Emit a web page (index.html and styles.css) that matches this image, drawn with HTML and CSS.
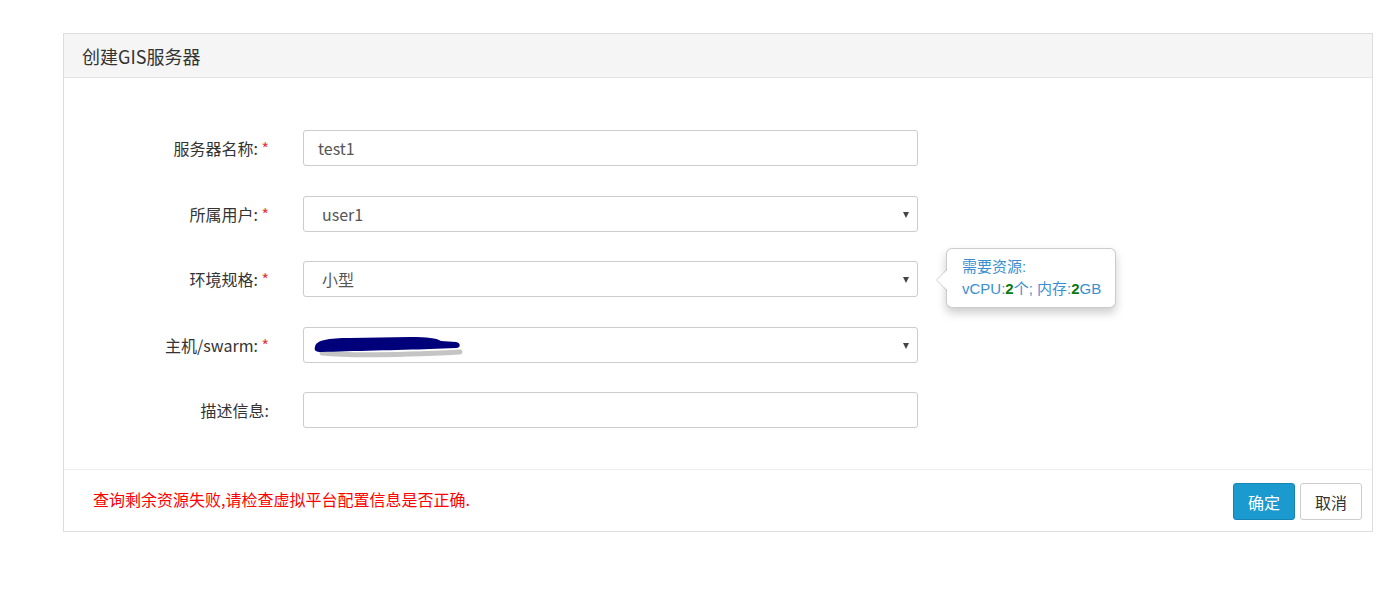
FILE: index.html
```html
<!DOCTYPE html>
<html lang="zh-CN">
<head>
<meta charset="utf-8">
<title>创建GIS服务器</title>
<link rel="stylesheet" href="styles.css">
</head>
<body>
<div class="panel">
  <div class="panel-heading">创建GIS服务器</div>
  <div class="panel-body">
    <div class="form-row">
      <label class="form-label">服务器名称: <span class="req">*</span></label>
      <div class="control">test1</div>
    </div>
    <div class="form-row">
      <label class="form-label">所属用户: <span class="req">*</span></label>
      <div class="control select"><span class="val">user1</span><span class="caret"></span></div>
    </div>
    <div class="form-row">
      <label class="form-label">环境规格: <span class="req">*</span></label>
      <div class="control select"><span class="val">小型</span><span class="caret"></span></div>
      <div class="popover">
        <div class="arrow"></div>
        <div class="pop-line">需要资源:</div>
        <div class="pop-line">vCPU:<b class="num">2</b>个; 内存:<b class="num">2</b>GB</div>
      </div>
    </div>
    <div class="form-row">
      <label class="form-label">主机/swarm: <span class="req">*</span></label>
      <div class="control select">
        <svg class="scribble" width="160" height="24" viewBox="0 0 160 24">
          <path d="M12 19 C40 22 90 21 150 18" stroke="#8a8a8a" stroke-width="5" fill="none" stroke-linecap="round" opacity="0.5"/>
          <path d="M5 13 C6 6 18 4 40 4 L100 3 C118 3 126 4 131 7 L146 8 C151 9 151 14 146 14 L120 15 C90 16 40 17 12 18 C5 18 4 16 5 13 Z" fill="#00007a"/>
        </svg>
        <span class="caret"></span>
      </div>
    </div>
    <div class="form-row">
      <label class="form-label">描述信息:</label>
      <div class="control"></div>
    </div>
  </div>
  <div class="panel-footer">
    <span class="error">查询剩余资源失败,请检查虚拟平台配置信息是否正确.</span>
    <div class="actions">
      <button class="btn btn-primary">确定</button>
      <button class="btn btn-default">取消</button>
    </div>
  </div>
</div>
</body>
</html>
```
FILE: styles.css
```css
html, body {
  margin: 0;
  padding: 0;
  background: #fff;
}
body {
  font-family: "Noto Sans CJK SC", "Liberation Sans", sans-serif;
  color: #333;
  padding: 33px 11px 0 63px;
}
.panel {
  border: 1px solid #ddd;
  background: #fff;
  width: 1308px;
}
.panel-heading {
  background: #f5f5f5;
  border-bottom: 1px solid #e3e3e3;
  height: 44px;
  box-sizing: border-box;
  padding: 0 18px;
  font-size: 18px;
  line-height: 44px;
  color: #333;
}
.panel-body {
  padding: 52px 0 11.5px 0;
}
.form-row {
  position: relative;
  display: grid;
  grid-template-columns: 205px 615px;
  column-gap: 34px;
  align-items: center;
  margin-bottom: 29.5px;
}
.form-label {
  text-align: right;
  font-size: 16px;
  color: #333;
  line-height: 36px;
  white-space: nowrap;
}
.req {
  color: #e4393c;
}
.control {
  position: relative;
  height: 36px;
  box-sizing: border-box;
  border: 1px solid #ccc;
  border-radius: 3px;
  padding: 0 14px;
  font-size: 16px;
  line-height: 34px;
  color: #555;
  background: #fff;
  display: flex;
  align-items: center;
}
.control.select {
  padding-left: 18px;
}
.control .val {
  flex: 1;
}
.caret {
  position: absolute;
  right: 8px;
  top: 15px;
  width: 0;
  height: 0;
  border-left: 3.5px solid transparent;
  border-right: 3.5px solid transparent;
  border-top: 6px solid #444;
}
.scribble {
  position: absolute;
  left: 6px;
  top: 6px;
}
.popover {
  position: absolute;
  left: 882px;
  top: -13px;
  width: 170px;
  height: 60px;
  box-sizing: border-box;
  border: 1px solid rgba(0,0,0,.2);
  border-radius: 6px;
  background: #fff;
  box-shadow: 0 5px 10px rgba(0,0,0,.2);
  padding: 7px 0 0 15px;
  font-family: "Liberation Sans", "Noto Sans CJK SC", sans-serif;
  font-size: 15px;
  line-height: 22px;
  color: #3a8fd0;
  white-space: nowrap;
}
.popover .arrow {
  position: absolute;
  left: -11px;
  top: 20px;
  width: 0;
  height: 0;
  border-top: 11px solid transparent;
  border-bottom: 11px solid transparent;
  border-right: 11px solid rgba(0,0,0,.18);
}
.popover .arrow::after {
  content: "";
  position: absolute;
  left: 1px;
  top: -10px;
  width: 0;
  height: 0;
  border-top: 10px solid transparent;
  border-bottom: 10px solid transparent;
  border-right: 10px solid #fff;
}
.num {
  color: #0a7a0a;
  font-weight: bold;
}
.panel-footer {
  border-top: 1px solid #eee;
  display: flex;
  align-items: center;
  justify-content: space-between;
  padding: 13px 10px 11px 29px;
}
.error {
  color: #ff0000;
  font-size: 16px;
  margin-top: -6px;
}
.actions {
  display: flex;
  gap: 5px;
}
.btn {
  width: 62px;
  height: 37px;
  box-sizing: border-box;
  border-radius: 3px;
  font-family: "Noto Sans CJK SC", "Liberation Sans", sans-serif;
  font-size: 16px;
  padding: 0;
  cursor: pointer;
}
.btn-primary {
  background: #1b9ad0;
  border: 1px solid #1683b5;
  color: #fff;
}
.btn-default {
  background: #fff;
  border: 1px solid #ccc;
  color: #333;
}
```
